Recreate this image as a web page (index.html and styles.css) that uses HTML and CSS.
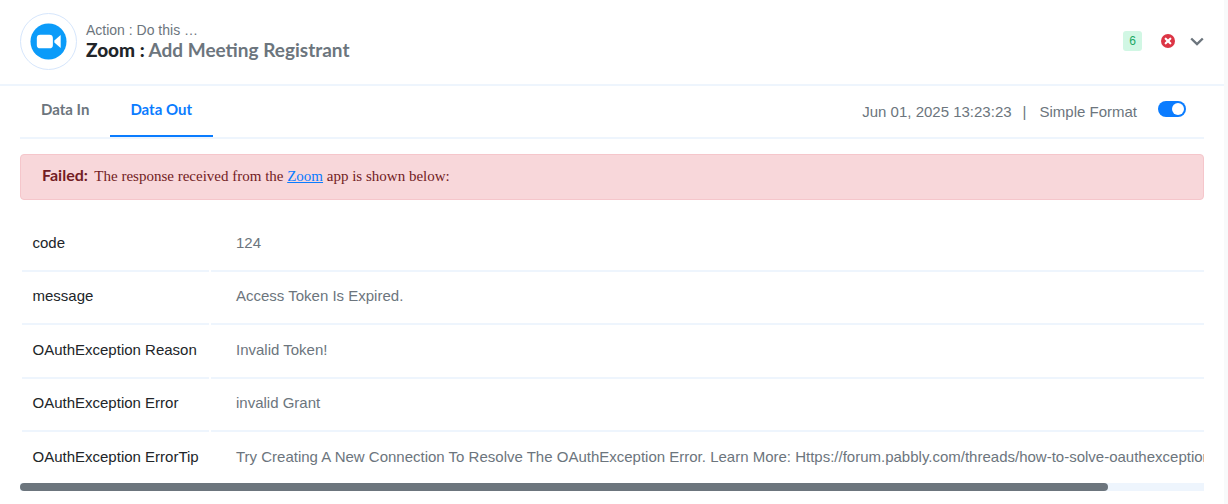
FILE: index.html
```html
<!DOCTYPE html>
<html lang="en">
<head>
  <meta charset="UTF-8">
  <meta name="viewport" content="width=device-width, initial-scale=1.0">
  <title>Action : Zoom</title>
  <link rel="stylesheet" href="styles.css">
</head>
<body>

<div class="card">
  <div class="step-head">
    <div class="app-logo">
      <svg viewBox="0 0 38 38" width="37" height="37">
        <circle cx="19" cy="19" r="18.5" fill="#0b9bf9"/>
        <rect x="7" y="12" width="16.5" height="14" rx="3.5" fill="#fff"/>
        <path d="M25 18 L31.5 12.3 V25.7 L25 20 Z" fill="#fff"/>
      </svg>
    </div>
    <div class="step-title">
      <div class="step-label">Action : Do this …</div>
      <div class="step-name"><b>Zoom :</b> Add Meeting Registrant</div>
    </div>
    <div class="step-tools">
      <span class="count-badge">6</span>
      <svg class="err-icon" viewBox="0 0 14 14" width="14" height="14">
        <circle cx="7" cy="7" r="7" fill="#dc3545"/>
        <path d="M4.7 4.7 L9.3 9.3 M9.3 4.7 L4.7 9.3" stroke="#fff" stroke-width="2.2" stroke-linecap="round"/>
      </svg>
      <svg class="chevron" viewBox="0 0 14 9" width="14" height="9">
        <path d="M1.2 1.5 L7 7 L12.8 1.5" fill="none" stroke="#6c757d" stroke-width="2.4"/>
      </svg>
    </div>
  </div>

  <div class="tabs">
    <a class="tab">Data In</a>
    <a class="tab active">Data Out</a>
    <div class="tabs-right">
      <span>Jun 01, 2025 13:23:23</span>
      <span class="sep">|</span>
      <span>Simple Format</span>
      <span class="toggle"><i></i></span>
    </div>
  </div>

  <div class="alert">
    <strong>Failed:</strong> The response received from the <a href="#">Zoom</a> app is shown below:
  </div>

  <div class="table-wrap">
    <div class="row">
      <div class="key">code</div>
      <div class="val">124</div>
    </div>
    <div class="row">
      <div class="key">message</div>
      <div class="val">Access Token Is Expired.</div>
    </div>
    <div class="row">
      <div class="key">OAuthException Reason</div>
      <div class="val">Invalid Token!</div>
    </div>
    <div class="row">
      <div class="key">OAuthException Error</div>
      <div class="val">invalid Grant</div>
    </div>
    <div class="row">
      <div class="key">OAuthException ErrorTip</div>
      <div class="val">Try Creating A New Connection To Resolve The OAuthException Error. Learn More: Https://forum.pabbly.com/threads/how-to-solve-oauthexception-error.html</div>
    </div>
  </div>

  <div class="scroll-track"><div class="scroll-thumb"></div></div>
</div>

</body>
</html>
```

FILE: styles.css
```css
* {
  box-sizing: border-box;
}

html, body {
  height: 100%;
}

body {
  margin: 0;
  background: #f8f9fa;
  font-family: "Liberation Sans", Arial, sans-serif;
  color: #6c757d;
  overflow: hidden;
}

.card {
  width: 1224px;
  height: 504px;
  background: #fff;
}

.step-head {
  display: flex;
  align-items: center;
  height: 86px;
  padding: 0 20px 2px 20px;
  border-bottom: 2px solid #eef5fd;
}

.app-logo {
  width: 57px;
  height: 57px;
  border: 1px solid #d6e6fc;
  border-radius: 50%;
  display: flex;
  align-items: center;
  justify-content: center;
  margin-right: 9px;
}

.step-title {
  padding-bottom: 2px;
}

.step-label {
  font-size: 14px;
  line-height: 18px;
  margin-bottom: 1px;
}

.step-name {
  font-family: Lato, sans-serif;
  font-size: 19px;
  font-weight: 700;
  line-height: 20px;
}

.step-name b {
  color: #212529;
}

.step-tools {
  margin-left: auto;
  display: flex;
  align-items: center;
}

.count-badge {
  width: 19px;
  height: 20px;
  background: #d1f7e4;
  color: #1aa865;
  border-radius: 3px;
  font-size: 12px;
  line-height: 20px;
  text-align: center;
}

.err-icon {
  margin-left: 19px;
}

.chevron {
  margin-left: 15px;
}

.tabs {
  display: flex;
  align-items: center;
  height: 53px;
  margin: 0 20px;
  border-bottom: 2px solid #eef5fd;
}

.tab {
  font-family: Lato, sans-serif;
  font-size: 15px;
  font-weight: 700;
  height: 51px;
  line-height: 47px;
  padding: 0 20px 0 21px;
  border-bottom: 2px solid transparent;
}

.tab.active {
  margin-left: 1px;
  padding: 0 21px 0 20px;
  color: #0a7cff;
  border-bottom-color: #0a7cff;
}

.tabs-right {
  margin-left: auto;
  display: flex;
  align-items: center;
  font-size: 15px;
  padding-right: 18px;
}

.sep {
  margin: 0 13px 0 11px;
}

.toggle {
  width: 28px;
  height: 16px;
  margin-left: 21px;
  margin-bottom: 6px;
  background: #0a7cff;
  border-radius: 8px;
  display: flex;
  justify-content: flex-end;
  align-items: center;
  padding-right: 2px;
}

.toggle i {
  width: 12px;
  height: 12px;
  background: #fff;
  border-radius: 50%;
}

.alert {
  height: 46px;
  margin: 15px 20px 0;
  padding: 0 21px;
  background: #f8d7da;
  border: 1px solid #f5c6cb;
  border-radius: 4px;
  color: #721c24;
  font-family: "Liberation Serif", "Times New Roman", serif;
  font-size: 15px;
  line-height: 40px;
  white-space: nowrap;
}

.alert strong {
  font-family: Lato, sans-serif;
  font-size: 16px;
  margin-right: 3px;
}

.alert a {
  color: #0a7cff;
}

.table-wrap {
  margin: 16px 20px 0;
  overflow: hidden;
}

.row {
  display: grid;
  grid-template-columns: 189px 1fr;
  height: 53.4px;
  font-size: 15px;
  line-height: 54px;
  white-space: nowrap;
}

.key {
  color: #212529;
  margin-left: 2px;
  padding-left: 10.5px;
  border-bottom: 2px solid #eef5fd;
}

.val {
  margin-left: 2px;
  padding-left: 25px;
  overflow: hidden;
  border-bottom: 2px solid #eef5fd;
}

.row:last-child .key,
.row:last-child .val {
  border-bottom: none;
}

.scroll-track {
  height: 8px;
  margin: 0 20px;
  background: #eef5fd;
}

.scroll-thumb {
  width: 1088px;
  height: 8px;
  background: #6c757d;
  border-radius: 4px;
}
```
